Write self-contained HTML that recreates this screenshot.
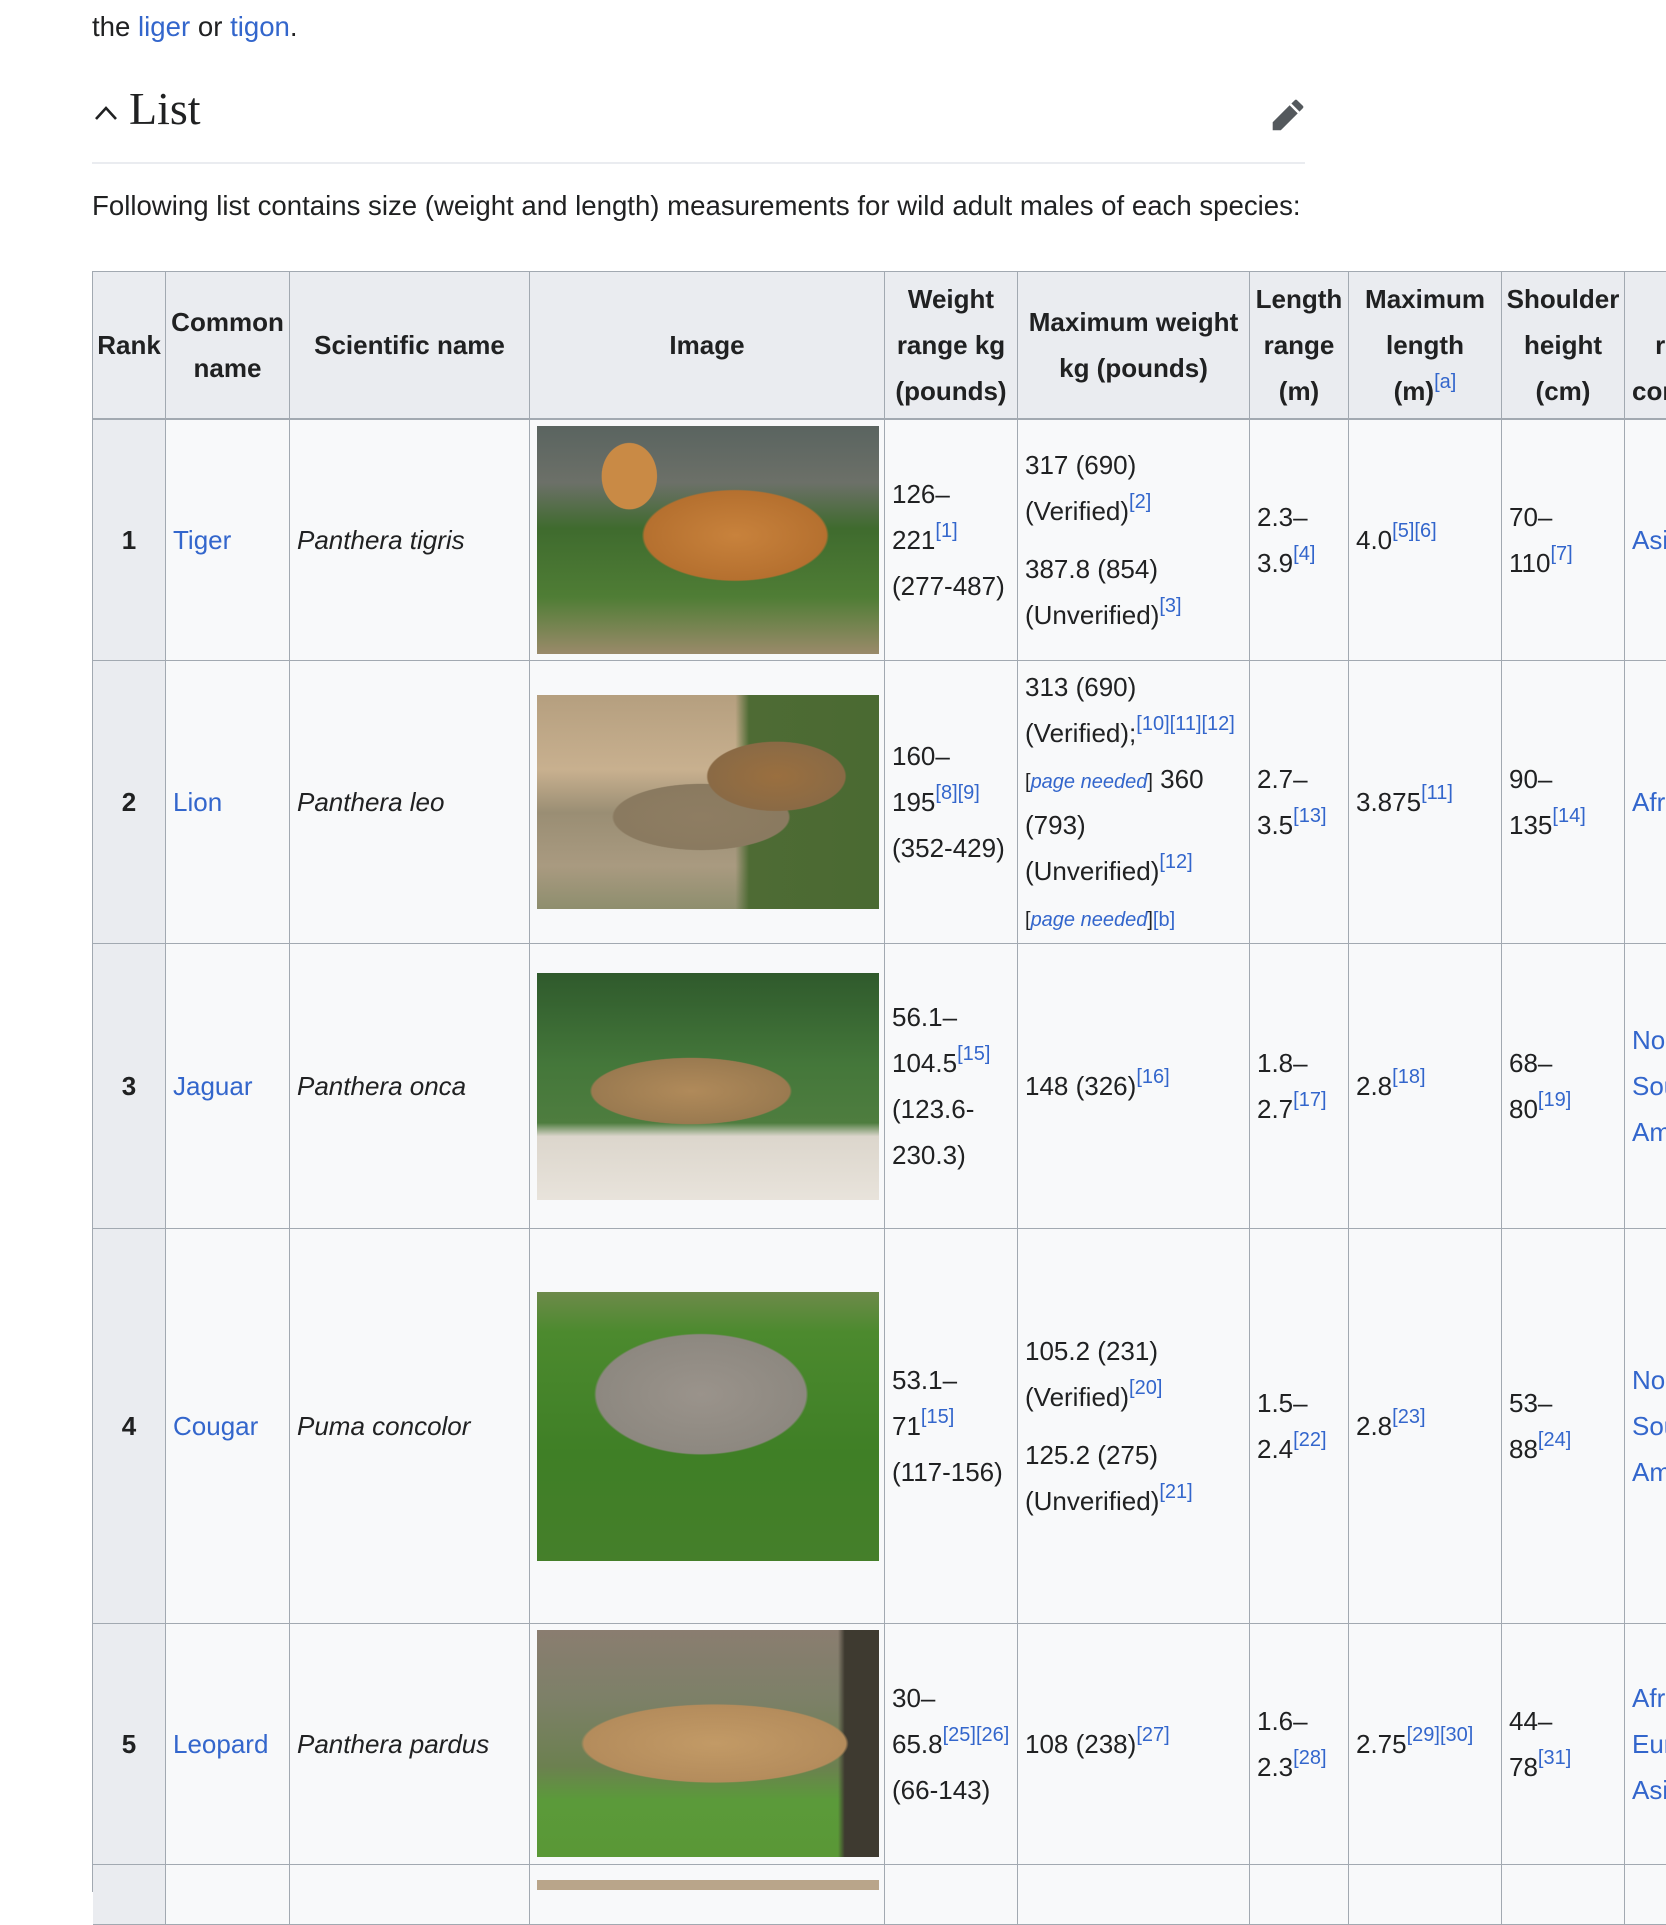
<!DOCTYPE html>
<html><head><meta charset="utf-8"><style>
body{margin:0;width:1666px;height:1887px;overflow:hidden;background:#fff;font-family:"Liberation Sans",sans-serif;color:#202122;position:relative}
a{color:#3366cc;text-decoration:none}
.t{position:absolute;font-size:27.6px;white-space:nowrap}
.c{position:absolute;box-sizing:border-box;border-right:1px solid #a2a9b1;border-bottom:1px solid #a2a9b1;background:#f8f9fa;display:flex;align-items:center;padding:0 7px;font-size:26px;line-height:46px;white-space:nowrap;overflow:hidden}
.h{background:#eaecf0;font-weight:bold;justify-content:center;text-align:center}
.r{background:#eaecf0;font-weight:bold;justify-content:center}
sup{font-size:20px;color:#3366cc;line-height:0;vertical-align:12px;font-weight:normal}
.pn{font-size:20px;color:#202122;line-height:30px}
.pn i,.pn a{color:#3366cc}
.img{position:absolute;left:537px;width:342px}
</style></head><body>
<div class="t" style="left:92px;top:11px">the <a>liger</a> or <a>tigon</a>.</div>
<svg style="position:absolute;left:93px;top:103px" width="26" height="20" viewBox="0 0 26 20"><path d="M3 16 L13 5 L23 16" fill="none" stroke="#202122" stroke-width="2.6"/></svg>
<div class="t" style="left:129px;top:82px;font-family:'Liberation Serif',serif;font-size:46px">List</div>
<svg style="position:absolute;left:1271px;top:98px" width="34" height="34" viewBox="0 0 20 20"><path d="M16.77 8l1.94-2a1 1 0 000-1.41l-3.34-3.3a1 1 0 00-1.41 0L12 3.23zM1 14.25V19h4.75l9.96-9.960-4.75-4.75z" fill="#54595d"/></svg>
<div style="position:absolute;left:92px;top:162px;width:1213px;height:2px;background:#eaecf0"></div>
<div class="t" style="left:92px;top:190px">Following list contains size (weight and length) measurements for wild adult males of each species:</div>
<div style="position:absolute;left:92px;top:272px;width:1px;height:1620px;background:#a2a9b1"></div>
<div style="position:absolute;left:92px;top:271px;width:1600px;height:1px;background:#a2a9b1"></div>

<div class="c h" style="left:93px;top:272px;width:73px;height:148px;border-bottom-width:2px"><div>Rank</div></div>
<div class="c h" style="left:166px;top:272px;width:124px;height:148px;border-bottom-width:2px"><div>Common<br>name</div></div>
<div class="c h" style="left:290px;top:272px;width:240px;height:148px;border-bottom-width:2px"><div>Scientific name</div></div>
<div class="c h" style="left:530px;top:272px;width:355px;height:148px;border-bottom-width:2px"><div>Image</div></div>
<div class="c h" style="left:885px;top:272px;width:133px;height:148px;border-bottom-width:2px"><div>Weight<br>range kg<br>(pounds)</div></div>
<div class="c h" style="left:1018px;top:272px;width:232px;height:148px;border-bottom-width:2px"><div>Maximum weight<br>kg (pounds)</div></div>
<div class="c h" style="left:1250px;top:272px;width:99px;height:148px;border-bottom-width:2px"><div>Length<br>range<br>(m)</div></div>
<div class="c h" style="left:1349px;top:272px;width:153px;height:148px;border-bottom-width:2px"><div>Maximum<br>length<br>(m)<sup>[a]</sup></div></div>
<div class="c h" style="left:1502px;top:272px;width:123px;height:148px;border-bottom-width:2px"><div>Shoulder<br>height<br>(cm)</div></div>
<div class="c h" style="left:1625px;top:272px;width:145px;height:148px;border-bottom-width:2px;justify-content:flex-start"><div style="text-align:center">&nbsp;<br>range<br>continent</div></div>

<div class="c r" style="left:93px;top:420px;width:73px;height:241px">1</div>
<div class="c" style="left:166px;top:420px;width:124px;height:241px"><a>Tiger</a></div>
<div class="c" style="left:290px;top:420px;width:240px;height:241px"><i>Panthera tigris</i></div>
<div class="c" style="left:530px;top:420px;width:355px;height:241px"></div>
<div class="c" style="left:885px;top:420px;width:133px;height:241px"><div>126–<br>221<sup>[1]</sup><br>(277-487)</div></div>
<div class="c" style="left:1018px;top:420px;width:232px;height:241px"><div>317 (690)<br>(Verified)<sup>[2]</sup><div style="height:12px"></div>387.8 (854)<br>(Unverified)<sup>[3]</sup></div></div>
<div class="c" style="left:1250px;top:420px;width:99px;height:241px"><div>2.3–<br>3.9<sup>[4]</sup></div></div>
<div class="c" style="left:1349px;top:420px;width:153px;height:241px"><div>4.0<sup>[5][6]</sup></div></div>
<div class="c" style="left:1502px;top:420px;width:123px;height:241px"><div>70–<br>110<sup>[7]</sup></div></div>
<div class="c" style="left:1625px;top:420px;width:100px;height:241px"><a>Asia</a></div>

<div class="c r" style="left:93px;top:661px;width:73px;height:283px">2</div>
<div class="c" style="left:166px;top:661px;width:124px;height:283px"><a>Lion</a></div>
<div class="c" style="left:290px;top:661px;width:240px;height:283px"><i>Panthera leo</i></div>
<div class="c" style="left:530px;top:661px;width:355px;height:283px"></div>
<div class="c" style="left:885px;top:661px;width:133px;height:283px"><div>160–<br>195<sup>[8][9]</sup><br>(352-429)</div></div>
<div class="c" style="left:1018px;top:661px;width:232px;height:283px"><div>313 (690)<br>(Verified);<sup>[10][11][12]</sup><br><span class="pn">[<i>page needed</i>]</span> 360<br>(793)<br>(Unverified)<sup>[12]</sup><br><span class="pn">[<i>page needed</i>]<a>[b]</a></span></div></div>
<div class="c" style="left:1250px;top:661px;width:99px;height:283px"><div>2.7–<br>3.5<sup>[13]</sup></div></div>
<div class="c" style="left:1349px;top:661px;width:153px;height:283px"><div>3.875<sup>[11]</sup></div></div>
<div class="c" style="left:1502px;top:661px;width:123px;height:283px"><div>90–<br>135<sup>[14]</sup></div></div>
<div class="c" style="left:1625px;top:661px;width:100px;height:283px"><a>Africa</a></div>

<div class="c r" style="left:93px;top:944px;width:73px;height:285px">3</div>
<div class="c" style="left:166px;top:944px;width:124px;height:285px"><a>Jaguar</a></div>
<div class="c" style="left:290px;top:944px;width:240px;height:285px"><i>Panthera onca</i></div>
<div class="c" style="left:530px;top:944px;width:355px;height:285px"></div>
<div class="c" style="left:885px;top:944px;width:133px;height:285px"><div>56.1–<br>104.5<sup>[15]</sup><br>(123.6-<br>230.3)</div></div>
<div class="c" style="left:1018px;top:944px;width:232px;height:285px"><div>148 (326)<sup>[16]</sup></div></div>
<div class="c" style="left:1250px;top:944px;width:99px;height:285px"><div>1.8–<br>2.7<sup>[17]</sup></div></div>
<div class="c" style="left:1349px;top:944px;width:153px;height:285px"><div>2.8<sup>[18]</sup></div></div>
<div class="c" style="left:1502px;top:944px;width:123px;height:285px"><div>68–<br>80<sup>[19]</sup></div></div>
<div class="c" style="left:1625px;top:944px;width:100px;height:285px"><div><a>North</a><br><a>South</a><br><a>America</a></div></div>

<div class="c r" style="left:93px;top:1229px;width:73px;height:395px">4</div>
<div class="c" style="left:166px;top:1229px;width:124px;height:395px"><a>Cougar</a></div>
<div class="c" style="left:290px;top:1229px;width:240px;height:395px"><i>Puma concolor</i></div>
<div class="c" style="left:530px;top:1229px;width:355px;height:395px"></div>
<div class="c" style="left:885px;top:1229px;width:133px;height:395px"><div>53.1–<br>71<sup>[15]</sup><br>(117-156)</div></div>
<div class="c" style="left:1018px;top:1229px;width:232px;height:395px"><div>105.2 (231)<br>(Verified)<sup>[20]</sup><div style="height:12px"></div>125.2 (275)<br>(Unverified)<sup>[21]</sup></div></div>
<div class="c" style="left:1250px;top:1229px;width:99px;height:395px"><div>1.5–<br>2.4<sup>[22]</sup></div></div>
<div class="c" style="left:1349px;top:1229px;width:153px;height:395px"><div>2.8<sup>[23]</sup></div></div>
<div class="c" style="left:1502px;top:1229px;width:123px;height:395px"><div>53–<br>88<sup>[24]</sup></div></div>
<div class="c" style="left:1625px;top:1229px;width:100px;height:395px"><div><a>North</a><br><a>South</a><br><a>America</a></div></div>

<div class="c r" style="left:93px;top:1624px;width:73px;height:241px">5</div>
<div class="c" style="left:166px;top:1624px;width:124px;height:241px"><a>Leopard</a></div>
<div class="c" style="left:290px;top:1624px;width:240px;height:241px"><i>Panthera pardus</i></div>
<div class="c" style="left:530px;top:1624px;width:355px;height:241px"></div>
<div class="c" style="left:885px;top:1624px;width:133px;height:241px"><div>30–<br>65.8<sup>[25][26]</sup><br>(66-143)</div></div>
<div class="c" style="left:1018px;top:1624px;width:232px;height:241px"><div>108 (238)<sup>[27]</sup></div></div>
<div class="c" style="left:1250px;top:1624px;width:99px;height:241px"><div>1.6–<br>2.3<sup>[28]</sup></div></div>
<div class="c" style="left:1349px;top:1624px;width:153px;height:241px"><div>2.75<sup>[29][30]</sup></div></div>
<div class="c" style="left:1502px;top:1624px;width:123px;height:241px"><div>44–<br>78<sup>[31]</sup></div></div>
<div class="c" style="left:1625px;top:1624px;width:100px;height:241px"><div><a>Africa</a><br><a>Europe</a><br><a>Asia</a></div></div>

<div class="c r" style="left:93px;top:1865px;width:73px;height:60px"></div>
<div class="c" style="left:166px;top:1865px;width:124px;height:60px"></div>
<div class="c" style="left:290px;top:1865px;width:240px;height:60px"></div>
<div class="c" style="left:530px;top:1865px;width:355px;height:60px"></div>
<div class="c" style="left:885px;top:1865px;width:133px;height:60px"></div>
<div class="c" style="left:1018px;top:1865px;width:232px;height:60px"></div>
<div class="c" style="left:1250px;top:1865px;width:99px;height:60px"></div>
<div class="c" style="left:1349px;top:1865px;width:153px;height:60px"></div>
<div class="c" style="left:1502px;top:1865px;width:123px;height:60px"></div>
<div class="c" style="left:1625px;top:1865px;width:100px;height:60px"></div>
<div class="img" style="top:1880px;height:10px;background:#b9a58a"></div>

<div class="img" style="top:426px;height:228px;background:radial-gradient(ellipse 38% 28% at 58% 48%,#c8823c 0,#b5702f 70%,rgba(0,0,0,0) 72%),radial-gradient(ellipse 10% 18% at 27% 22%,#c98a45 0,#c98a45 80%,rgba(0,0,0,0) 82%),linear-gradient(180deg,#5a6460 0,#6c7068 25%,#3f6b2e 45%,#4f7d35 75%,#9a8a6a 100%)"></div>
<div class="img" style="top:695px;height:214px;background:radial-gradient(ellipse 25% 20% at 70% 38%,#9a6f3f 0,#8a6a45 80%,rgba(0,0,0,0) 82%),radial-gradient(ellipse 30% 18% at 48% 57%,#8e7d62 0,#8a7a60 85%,rgba(0,0,0,0) 87%),linear-gradient(90deg,rgba(0,0,0,0) 0,rgba(0,0,0,0) 58%,#4e6b34 62%,#4a6a32 100%),linear-gradient(180deg,#b59f7f 0,#c8b08f 35%,#9a8e74 55%,#a99a80 80%,#8e8e6e 100%)"></div>
<div class="img" style="top:973px;height:227px;background:radial-gradient(ellipse 34% 17% at 45% 52%,#b08a5a 0,#9a7a50 85%,rgba(0,0,0,0) 87%),linear-gradient(180deg,#2f5a2c 0,#44773a 40%,#4e7d3f 66%,#dcd6cc 72%,#e8e3db 100%)"></div>
<div class="img" style="top:1292px;height:269px;background:radial-gradient(ellipse 36% 26% at 48% 38%,#9a938b 0,#8d8880 85%,rgba(0,0,0,0) 87%),linear-gradient(180deg,#6d8a4a 0,#4c8a2e 15%,#3f7f26 60%,#457f2a 100%)"></div>
<div class="img" style="top:1630px;height:227px;background:radial-gradient(ellipse 45% 20% at 52% 50%,#c29a66 0,#b48c5c 85%,rgba(0,0,0,0) 87%),linear-gradient(90deg,rgba(0,0,0,0) 0,rgba(0,0,0,0) 88%,#3e3a30 90%,#3e3a30 100%),linear-gradient(180deg,#8a7d70 0,#7d8068 30%,#6c8050 60%,#5b9a3a 75%,#5a9836 100%)"></div>
</body></html>
